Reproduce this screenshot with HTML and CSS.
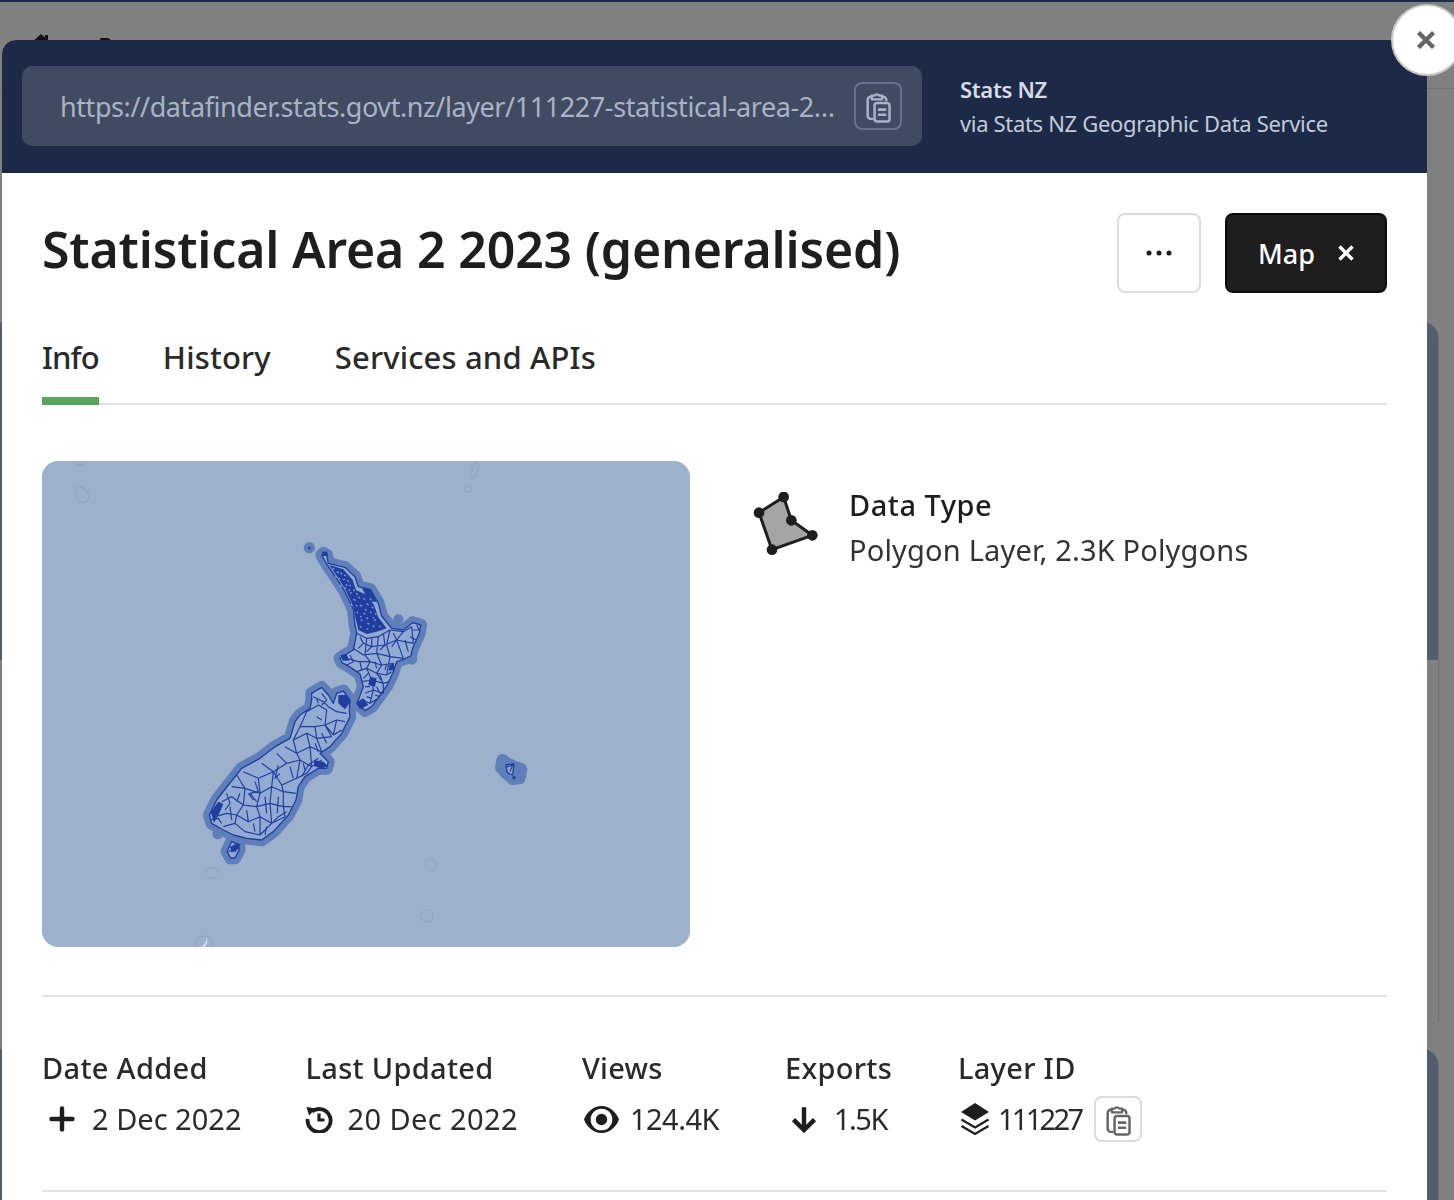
FILE: index.html
```html
<!DOCTYPE html>
<html lang="en">
<head>
<meta charset="utf-8">
<title>Statistical Area 2 2023 (generalised)</title>
<link rel="stylesheet" href="styles.css">
</head>
<body>
<svg class="defs" width="0" height="0" aria-hidden="true">
  <symbol id="clip" viewBox="0 0 24 32">
    <path d="M15.500 6.500h1a3 3 0 0 1 3 3V11M5.500 6.500h-1a3 3 0 0 0-3 3V25a3 3 0 0 0 3 3H7" fill="none" stroke="currentColor" stroke-width="2.400"/>
    <path d="M5.500 9V5.500h2.600a2.800 2.800 0 0 1 4.800 0h2.600V9z" fill="none" stroke="currentColor" stroke-width="2.200" stroke-linejoin="round"/>
    <rect x="8.200" y="12.500" width="14.500" height="18" rx="2.500" fill="none" stroke="currentColor" stroke-width="2.400"/>
    <path d="M11.500 19h8M11.500 24h8" stroke="currentColor" stroke-width="2.600"/>
  </symbol>
  <path id="ni" d="M395 75L410 75L415 100L465 112L495 140L505 170L540 178L565 220L575 258L605 295L640 300L668 278L692 285L688 310L668 355L662 378L640 388L620 395L608 430L592 465L565 503L545 530L525 542L507 525L503 515L520 470L510 432L478 410L455 397L450 385L465 375L490 360L500 310L495 285L490 238L465 185L440 145L412 105Z"/>
  <path id="si" d="M365 490L395 472L415 495L430 520L440 490L460 483L480 510L478 545L480 560L455 610L420 650L390 670L415 695L410 715L385 715L345 740L325 770L318 810L295 855L250 905L215 930L170 925L130 915L100 900L65 880L58 855L80 810L115 765L155 715L210 685L255 650L300 625L315 575L330 555L360 535L365 510Z"/>
  <path id="st" d="M125 934L146 945L148 958L135 984L122 984L111 965Z"/>
</svg>

<div class="backdrop">
  <header class="bg-header">
    <svg class="bg-home" viewBox="0 0 24 20"><path d="M12 0l4 3.500V1h3v5l5 5h-3v9H3v-9H0z" fill="#111"/></svg>
    <span class="bg-link">Pages</span>
  </header>
  <div class="bg-card"><div class="bg-thumb"></div></div>
  <div class="bg-card"><div class="bg-thumb"></div></div>
</div>

<main class="modal">
  <section class="modal-top">
    <div class="url-box">
      <span class="url-text">https://datafinder.stats.govt.nz/layer/111227-statistical-area-2…</span>
      <button class="copy copy-dark" type="button" aria-label="Copy URL"><svg class="copy-icon"><use href="#clip"/></svg></button>
    </div>
    <div class="publisher">
      <strong>Stats NZ</strong>
      <span>via Stats NZ Geographic Data Service</span>
    </div>
  </section>

  <section class="modal-body">
    <div class="title-row">
      <h1>Statistical Area 2 2023 (generalised)</h1>
      <div class="actions">
        <button class="btn-more" type="button" aria-label="More"><svg viewBox="0 0 28 6" width="28" height="6"><circle cx="4" cy="3" r="2.500"/><circle cx="14" cy="3" r="2.500"/><circle cx="24" cy="3" r="2.500"/></svg></button>
        <button class="btn-map" type="button"><span>Map</span><svg viewBox="0 0 16 16" width="16" height="16"><path d="M1.500 1.500l13 13M14.500 1.500l-13 13" stroke="#fff" stroke-width="3.400" fill="none"/></svg></button>
      </div>
    </div>

    <nav class="tabs">
      <a class="tab active">Info</a>
      <a class="tab">History</a>
      <a class="tab">Services and APIs</a>
    </nav>

    <div class="overview">
      <div class="map">
        <svg class="map-svg" viewBox="42 461 648 486" aria-label="Map of New Zealand">
          <g class="rings">
            <ellipse cx="80" cy="461" rx="6" ry="4"/>
            <ellipse cx="82" cy="495" rx="6" ry="8" transform="rotate(-30 82 495)"/>
            <ellipse cx="475" cy="470" rx="3" ry="8" transform="rotate(15 475 470)"/>
            <ellipse cx="468" cy="489" rx="4" ry="3"/>
            <ellipse cx="212" cy="873" rx="6.500" ry="5.500"/>
            <circle cx="431" cy="865" r="5.500"/>
            <circle cx="427" cy="916" r="6"/>
            <circle cx="204" cy="945" r="9"/>
          </g>
          <path class="tick" d="M202 947l4-5 1-6 0 7-3 4z"/>
          <g transform="translate(190 530) scale(.33333)">
            <g class="halo">
              <use href="#ni"/><use href="#si"/><use href="#st"/>
              <path d="M938 691L952 702L975 712L993 718L988 744L968 746L948 728L934 712Z"/>
            </g>
            <g class="islets">
              <circle cx="358" cy="53" r="17"/>
              <circle cx="400" cy="68" r="18"/>
              <circle cx="625" cy="268" r="15"/>
              <circle cx="665" cy="387" r="17"/>
              <circle cx="83" cy="912" r="16"/>
              <circle cx="405" cy="705" r="24"/>
            </g>
            <g class="land">
              <use href="#ni"/><use href="#si"/><use href="#st"/>
              <path d="M948 705L972 702L968 735L952 728Z"/>
            </g>
            <g class="dense">
              <path d="M418 105L460 118L488 150L498 180L530 195L552 225L565 262L590 295L560 305L530 312L505 300L498 270L490 230L470 185L445 145Z"/>
              <path d="M515 170L545 180L560 215L535 215Z"/>
              <path d="M445 495L470 495L482 515L465 538L445 520Z"/>
              <path d="M498 518L520 505L535 525L510 538Z"/>
              <path d="M372 690L400 695L414 708L395 716L372 708Z"/>
              <path d="M62 845L85 815L100 822L88 850L72 878Z"/>
              <path d="M598 405L612 400L610 420L596 422Z"/>
              <path d="M452 375L470 372L478 392L458 392Z"/>
              <path d="M540 440L560 445L555 470L535 465Z"/>
              <path d="M120 950L145 938L148 955L125 968Z"/>
              <path d="M395 65L412 65L414 78L400 78Z"/>
              <circle cx="358" cy="54" r="4"/>
              <circle cx="972" cy="743" r="5"/>
            </g>
            <g class="specks">
              <path d="M428 115l5 3M440 125l7 4M452 128l4 5M462 135l6 3M445 145l6 2M458 150l7-3M472 150l4 6M462 172l6 5M478 165l4 4M480 190l6-2M490 178l4 5M490 208l7 3M505 200l5 5M520 205l5 3M510 225l6 4M530 222l6 2M500 245l4 5M520 250l6 2M540 245l5 4M512 272l5-3M532 280l6 2M552 272l6-3M510 292l5-3M530 296l5 2M548 290l5-3M568 288l4 3M475 128l5 6M540 205l4 6M555 250l4 4M436 138l5 5M450 165l5 6M468 162l3 6M476 178l3 5M498 190l5 3M482 222l4 5M498 225l4 4M525 238l5 3M545 230l5 5M510 258l5 3M530 262l4 5M548 262l4 3"/>
            </g>
            <g class="lines">
              <path d="M500 310L530 325L565 320L600 300L640 305L665 290M520 340L545 350L585 345L620 330L670 340M490 355L520 375L560 370L600 380L640 385M470 385L505 395L540 395L575 405L610 400M500 425L530 415L560 430L590 435L605 425M515 455L545 450L580 460L598 455M525 490L550 480L580 490M515 510L540 520L565 505M530 325L525 375L540 395L530 415L545 450L550 480L540 520M565 320L560 370L575 405L560 430L580 460L580 490M600 300L590 345L600 380L590 435M640 305L620 330L640 385M665 290L670 340M680 285L690 305M668 300L690 300M660 320L680 330M480 375L490 395L470 405M610 400L612 425"/>
              <path d="M510 320L520 340L505 355M545 325L545 350L530 365M580 310L585 345L570 360M610 310L620 330L605 350M645 330L655 365M510 395L515 420M555 395L560 415M590 400L585 420M535 430L520 445M570 435L575 450M525 470L540 470M560 470L570 490M555 495L570 500M530 500L545 505"/>
              <path d="M370 500L400 515L415 530L440 545L470 550M350 545L385 525L410 540L405 585L440 570L465 575M330 590L375 590L405 585L430 615L455 600M310 630L350 610L380 625L425 620M285 650L320 670L360 650L395 665M260 670L290 700L330 690L365 710L395 690M215 700L250 725L290 700M160 725L205 745L250 725L275 765L320 745L350 730M125 770L165 775L210 790L245 770L280 785L318 790M95 815L125 800L160 825L200 830L240 820L280 830L305 830M75 860L110 850L140 855L175 875L210 860L245 880L285 860M100 890L135 880L165 905L210 915L245 880M140 735L165 775L160 825L140 855L135 880M205 745L210 790L200 830L210 860L210 915M250 725L245 770L240 820L245 880M275 765L280 785L280 830L285 860M320 670L330 690L320 745M350 610L360 650L365 710L350 730M375 590L380 625L395 665M405 585L425 620M440 570L430 615M350 545L330 590L310 630L320 670"/>
              <path d="M265 705L255 745L270 730M195 755L205 785L180 790L200 815M175 790L190 810M110 790L120 820L105 840M300 710L310 745M340 700L345 720M375 640L385 665M385 685L355 705L335 740M410 640L395 610M380 560L395 570M395 490L410 510L395 525M380 505L385 520M150 790L140 815M225 800L230 850M265 800L262 850M120 830L125 870M170 840L175 875M190 880L195 905M230 890L225 915M290 845L265 860L250 875M60 870L85 865L95 880M90 830L75 850"/>
              <path d="M115 965L145 950L135 965L150 942"/>
              <path d="M950 712L968 705L960 725"/>
            </g>
          </g>
        </svg>
      </div>
      <div class="data-type">
        <svg class="poly-icon" viewBox="40 40 195 195">
          <path d="M58 102L132 55L155 125L218 170L97 213Z" fill="#a5a5a5" stroke="#1e1e1e" stroke-width="9" stroke-linejoin="round"/>
          <circle cx="58" cy="102" r="16"/><circle cx="132" cy="55" r="16"/><circle cx="155" cy="125" r="16"/><circle cx="218" cy="170" r="16"/><circle cx="97" cy="213" r="16"/>
        </svg>
        <div class="data-text">
          <h2>Data Type</h2>
          <p>Polygon Layer, 2.3K Polygons</p>
        </div>
      </div>
    </div>

    <div class="stats">
      <div class="stat">
        <h3>Date Added</h3>
        <div class="stat-value"><svg class="ico ico-plus" viewBox="0 0 24 24"><path d="M12 3v18M3 12h18" stroke="#1e1e1e" stroke-width="3.800" stroke-linecap="round"/></svg><span>2 Dec 2022</span></div>
      </div>
      <div class="stat">
        <h3>Last Updated</h3>
        <div class="stat-value tight"><svg class="ico" viewBox="0 0 28 28"><path d="M7 6.500A11.500 11.500 0 1 1 2.700 14" fill="none" stroke="#1e1e1e" stroke-width="3.800"/><path d="M1.500 2l9.500 1.500-7 7z" fill="#1e1e1e"/><path d="M14 8.500V15h5.500" fill="none" stroke="#1e1e1e" stroke-width="3.200"/></svg><span class="num-date">20 Dec 2022</span></div>
      </div>
      <div class="stat stat-views">
        <h3>Views</h3>
        <div class="stat-value eye-value"><svg class="ico ico-eye" viewBox="1 3 22 18"><path fill-rule="evenodd" d="M12 3.500C7 3.500 2.700 7.300 1 12c1.700 4.700 6 8.500 11 8.500s9.300-3.800 11-8.500c-1.700-4.700-6-8.500-11-8.500zM12 5.200a6.800 6.800 0 1 0 0 13.600 6.800 6.800 0 0 0 0-13.600zM12 8.400a3.600 3.600 0 1 1 0 7.200 3.600 3.600 0 0 1 0-7.200z" fill="#1e1e1e"/></svg><span class="num-views">124.4K</span></div>
      </div>
      <div class="stat stat-exports">
        <h3>Exports</h3>
        <div class="stat-value"><svg class="ico ico-down" viewBox="0 0 24 24"><path d="M12 2v19M3 12.500l9 9 9-9" fill="none" stroke="#1e1e1e" stroke-width="3.800"/></svg><span class="num-exports">1.5K</span></div>
      </div>
      <div class="stat">
        <h3>Layer ID</h3>
        <div class="stat-value id-value"><svg class="ico ico-layers" viewBox="0 0 30 34"><path d="M15 1L29 10 15 18.500 1 10z" fill="#1e1e1e"/><path d="M1.500 17.500L15 25.500l13.500-8M1.500 24L15 32l13.500-8" fill="none" stroke="#1e1e1e" stroke-width="2.200"/></svg><span class="num-id">111227</span><button class="copy copy-light" type="button" aria-label="Copy ID"><svg class="copy-icon"><use href="#clip"/></svg></button></div>
      </div>
    </div>
  </section>
</main>

<button class="close" type="button" aria-label="Close"><svg viewBox="0 0 20 20" width="20" height="20"><path d="M2.500 2.500l15 15M17.500 2.500l-15 15" stroke="#666" stroke-width="4.500" fill="none"/></svg></button>
</body>
</html>
```

FILE: styles.css
```css
* { box-sizing: border-box; }
html, body { margin: 0; height: 1200px; overflow: hidden; }
body {
  position: relative;
  width: 1454px;
  background: #808080;
  color: #1e1e1e;
  font-family: "Noto Sans", "Open Sans", sans-serif;
}
.defs { position: absolute; }
button { font-family: inherit; cursor: pointer; padding: 0; }

/* dimmed page behind the dialog */
.backdrop { height: 1200px; border-top: 2px solid #1c2a47; overflow: hidden; }
.bg-header {
  height: 87px;
  border-bottom: 1px solid #747474;
  display: flex;
  align-items: flex-start;
  padding: 32px 0 0 29px;
  gap: 45px;
}
.bg-home { width: 24px; height: 20px; }
.bg-link { font-size: 24px; line-height: 24px; font-weight: 600; color: #111; }
.bg-card {
  width: 1439px;
  height: 700px;
  margin-top: 233px;
  border-right: 1px solid #6f6f6f;
  border-top-right-radius: 16px;
  overflow: hidden;
}
.bg-card + .bg-card { margin-top: 27px; }
.bg-thumb { height: 338px; background: #515e6e; }

/* dialog */
.modal {
  position: absolute;
  left: 2px;
  top: 40px;
  width: 1425px;
  height: 1180px;
  background: #fff;
  border-top-left-radius: 14px;
  overflow: hidden;
}
.modal-top {
  height: 133px;
  background: #1c2a47;
  display: flex;
  align-items: flex-start;
  padding: 26px 0 0 20px;
  gap: 38px;
}
.url-box {
  width: 900px;
  height: 80px;
  flex: none;
  background: #404b62;
  border-radius: 10px;
  display: flex;
  align-items: center;
  justify-content: space-between;
  padding: 0 20px 0 38px;
}
.url-text {
  font-size: 27px;
  color: #a9b3c6;
  white-space: nowrap;
  letter-spacing: -.42px;
}
.copy { display: flex; align-items: center; justify-content: center; width: 48px; height: 48px; background: transparent; border-radius: 8px; flex: none; }
.copy-dark { border: 2px solid #66718a; color: #a9b3c6; }
.copy-light { border: 2px solid #dcdcdc; color: #666; }
.copy-icon { width: 25px; height: 33px; }
.publisher { display: flex; flex-direction: column; padding-top: 6px; font-size: 22px; line-height: 34px; color: #c3cbda; letter-spacing: -.33px; }
.publisher strong { font-weight: 600; color: #d6dbe5; }

.modal-body { padding: 40px 40px 0; }
.title-row { display: flex; justify-content: space-between; align-items: center; height: 80px; }
h1 { margin: 0 0 8px; font-size: 50px; font-weight: 600; line-height: 74px; letter-spacing: -.17px; }
.actions { display: flex; gap: 24px; margin-top: 0; }
.btn-more { width: 84px; height: 80px; background: #fff; border: 2px solid #dcdcdc; border-radius: 8px; display: flex; align-items: center; justify-content: center; }
.btn-more svg { fill: #1e1e1e; }
.btn-map { width: 162px; height: 80px; background: #1e1e1e; border: 2px solid #0c0c0c; border-radius: 8px; color: #fff; font-size: 27px; font-weight: 500; display: flex; align-items: center; justify-content: center; gap: 23px; }

.tabs { display: flex; gap: 64px; height: 71px; margin-top: 41px; border-bottom: 2px solid #e3e3e3; }
.tab { position: relative; font-size: 31px; font-weight: 500; line-height: 46px; color: #2a2a2a; letter-spacing: .15px; }
.tab.active { letter-spacing: -.9px; }
.tab.active::after { content: ""; position: absolute; left: 0; right: 0; bottom: -2px; height: 8px; background: #58a65c; }

.overview { display: flex; padding: 56px 0 48px; border-bottom: 2px solid #e3e3e3; }
.map { width: 648px; height: 486px; flex: none; border-radius: 16px; overflow: hidden; background: #9db1cd; }
.map-svg { display: block; width: 648px; height: 486px; }
.rings { fill: none; stroke: #8d9fba; stroke-width: 1; opacity: .8; }
.tick { fill: #e8edf4; }
.halo { fill: #5f7fbb; stroke: #5f7fbb; stroke-width: 38; stroke-linejoin: round; }
.islets { fill: #5f7fbb; }
.land { fill: #93aad2; stroke: #1f3ea0; stroke-width: 4; stroke-linejoin: round; }
.dense { fill: #1f3ea0; }
.specks { fill: none; stroke: #7f9acb; stroke-width: 4; }
.lines { fill: none; stroke: #1f3ea0; stroke-width: 3.500; stroke-linejoin: round; }

.data-type { display: flex; gap: 31px; padding: 31px 0 0 63px; }
.poly-icon { width: 65px; height: 65px; flex: none; fill: #1e1e1e; }
.data-text { margin-top: -9px; }
h2 { margin: 0; font-size: 29px; font-weight: 500; line-height: 44px; letter-spacing: .5px; }
.data-text p { margin: 0; font-size: 29px; line-height: 45px; color: #333; letter-spacing: .18px; }

.stats { display: flex; gap: 64px; padding-top: 48px; height: 195px; border-bottom: 2px solid #e3e3e3; }
.stat-views { width: 139px; }
.stat-exports { width: 109px; }
h3 { margin: 0 0 5px; font-size: 29px; font-weight: 500; line-height: 46px; color: #2a2a2a; letter-spacing: .3px; }
.stat-value { display: flex; align-items: center; gap: 16px; height: 46px; font-size: 29px; color: #2a2a2a; }
.stat-value span { margin-top: -2px; }
.stat-value.tight { gap: 14px; }
.eye-value { gap: 11px; }
.num-date { letter-spacing: .4px; }
.num-views { letter-spacing: -.5px; }
.num-exports { letter-spacing: -1.5px; }
.num-id { letter-spacing: -2.7px; }
.ico { width: 28px; height: 28px; flex: none; }
.ico-plus { margin-left: 6px; }
.ico-eye { width: 35px; height: 29px; margin-left: 2px; }
.ico-down { margin-left: 5px; }
.ico-layers { width: 30px; height: 34px; margin-left: 2px; }
.id-value { gap: 8px; }
.id-value .copy { margin-left: 5px; height: 46px; }

.close {
  position: absolute;
  left: 1391px;
  top: 4px;
  width: 72px;
  height: 72px;
  border-radius: 50%;
  background: #fff;
  border: 2px solid #c8c8c8;
  display: flex;
  align-items: center;
  padding-left: 23px;
}
```
